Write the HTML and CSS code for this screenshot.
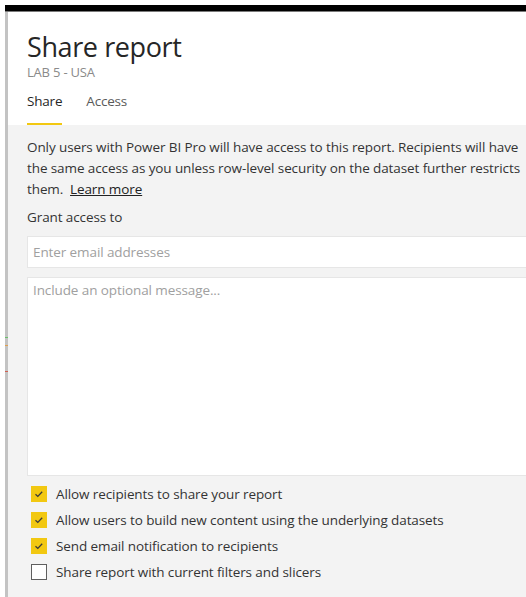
FILE: index.html
```html
<!DOCTYPE html>
<html lang="en">
<head>
<meta charset="utf-8">
<title>Share report</title>
<link rel="stylesheet" href="styles.css">
</head>
<body>
<div class="frame">
  <div class="topbar"></div>
  <div class="main">
    <div class="edge">
      <span class="mark mark-green"></span>
      <span class="mark mark-orange"></span>
      <span class="mark mark-red"></span>
    </div>
    <div class="panel">
      <header class="head">
        <h1 class="title">Share report</h1>
        <div class="subtitle">LAB 5 - USA</div>
        <nav class="tabs">
          <span class="tab tab-active">Share</span>
          <span class="tab">Access</span>
        </nav>
      </header>
      <section class="body">
        <p class="info">Only users with Power BI Pro will have access to this report. Recipients will have the same access as you unless row-level security on the dataset further restricts them.&nbsp; <a class="link" href="#">Learn more</a></p>
        <div class="label">Grant access to</div>
        <div class="field email">Enter email addresses</div>
        <div class="field message">Include an optional message...</div>
        <ul class="options">
          <li class="option"><span class="box checked"><svg viewBox="0 0 16 16" width="16" height="16"><polyline points="4.5,8.3 6.8,10.4 11.2,5.8" fill="none" stroke="#3a3a3a" stroke-width="1.3"/></svg></span>Allow recipients to share your report</li>
          <li class="option"><span class="box checked"><svg viewBox="0 0 16 16" width="16" height="16"><polyline points="4.5,8.3 6.8,10.4 11.2,5.8" fill="none" stroke="#3a3a3a" stroke-width="1.3"/></svg></span>Allow users to build new content using the underlying datasets</li>
          <li class="option"><span class="box checked"><svg viewBox="0 0 16 16" width="16" height="16"><polyline points="4.5,8.3 6.8,10.4 11.2,5.8" fill="none" stroke="#3a3a3a" stroke-width="1.3"/></svg></span>Send email notification to recipients</li>
          <li class="option"><span class="box"></span>Share report with current filters and slicers</li>
        </ul>
      </section>
    </div>
  </div>
</div>
</body>
</html>
```

FILE: styles.css
```css
* { box-sizing: border-box; }
html, body { margin: 0; padding: 0; height: 100%; }
body {
  background: #ffffff;
  font-family: "Open Sans", "Noto Sans", sans-serif;
  color: #333333;
  overflow: hidden;
}
.frame {
  padding: 5px 0 0 5px;
  height: 100%;
  display: flex;
  flex-direction: column;
}
.topbar {
  height: 7px;
  background: #000000;
  border-bottom: 1px solid #7a7a7a;
  flex: none;
}
.main {
  flex: 1;
  display: flex;
  min-height: 0;
}
.edge {
  width: 3px;
  background: #c3c3c3;
  flex: none;
  position: relative;
}
.mark {
  position: absolute;
  left: 0;
  width: 3px;
  height: 1px;
}
.mark-green { top: 325px; background: #6cbf6c; }
.mark-orange { top: 333px; background: #e0a050; }
.mark-red { top: 359px; background: #d06050; }
.panel {
  flex: 1;
  display: flex;
  flex-direction: column;
  overflow: hidden;
}
.head {
  background: #ffffff;
  padding: 19px 0 0 19px;
  flex: none;
}
.title {
  margin: 0;
  font-weight: 400;
  font-size: 27px;
  line-height: 32px;
  letter-spacing: -0.4px;
  color: #262626;
}
.subtitle {
  font-size: 13px;
  line-height: 18px;
  color: #8a8a8a;
  letter-spacing: -0.2px;
}
.tabs {
  display: flex;
  gap: 24px;
  margin-top: 10px;
}
.tab {
  font-size: 13.5px;
  line-height: 20px;
  padding-bottom: 12px;
  color: #5a5a5a;
  letter-spacing: -0.2px;
  border-bottom: 2px solid transparent;
}
.tab-active {
  color: #262626;
  border-bottom-color: #f2c811;
}
.body {
  flex: 1;
  background: #f3f3f3;
  padding: 12px 0 0 19px;
  font-size: 13.5px;
  letter-spacing: -0.1px;
}
.info {
  margin: 0;
  line-height: 21px;
  padding-right: 4px;
  color: #333333;
}
.link {
  color: #222222;
  text-decoration: underline;
}
.label {
  margin-top: 7px;
  line-height: 20px;
  color: #333333;
}
.field {
  background: #ffffff;
  border: 1px solid #e6e6e6;
  margin-right: -20px;
  color: #a0a0a0;
  padding: 0 5px;
}
.email {
  margin-top: 9px;
  height: 32px;
  line-height: 30px;
}
.message {
  margin-top: 9px;
  height: 199px;
  padding-top: 2px;
  line-height: 20px;
}
.options {
  list-style: none;
  margin: 5px 0 0 0;
  padding: 0 0 0 4px;
}
.option {
  display: flex;
  align-items: center;
  gap: 9px;
  height: 26px;
  color: #333333;
}
.box {
  width: 16px;
  height: 16px;
  flex: none;
  border: 1px solid #5f5f5f;
  background: #ffffff;
  display: flex;
}
.box.checked {
  border: none;
  background: #f2c811;
}
```
